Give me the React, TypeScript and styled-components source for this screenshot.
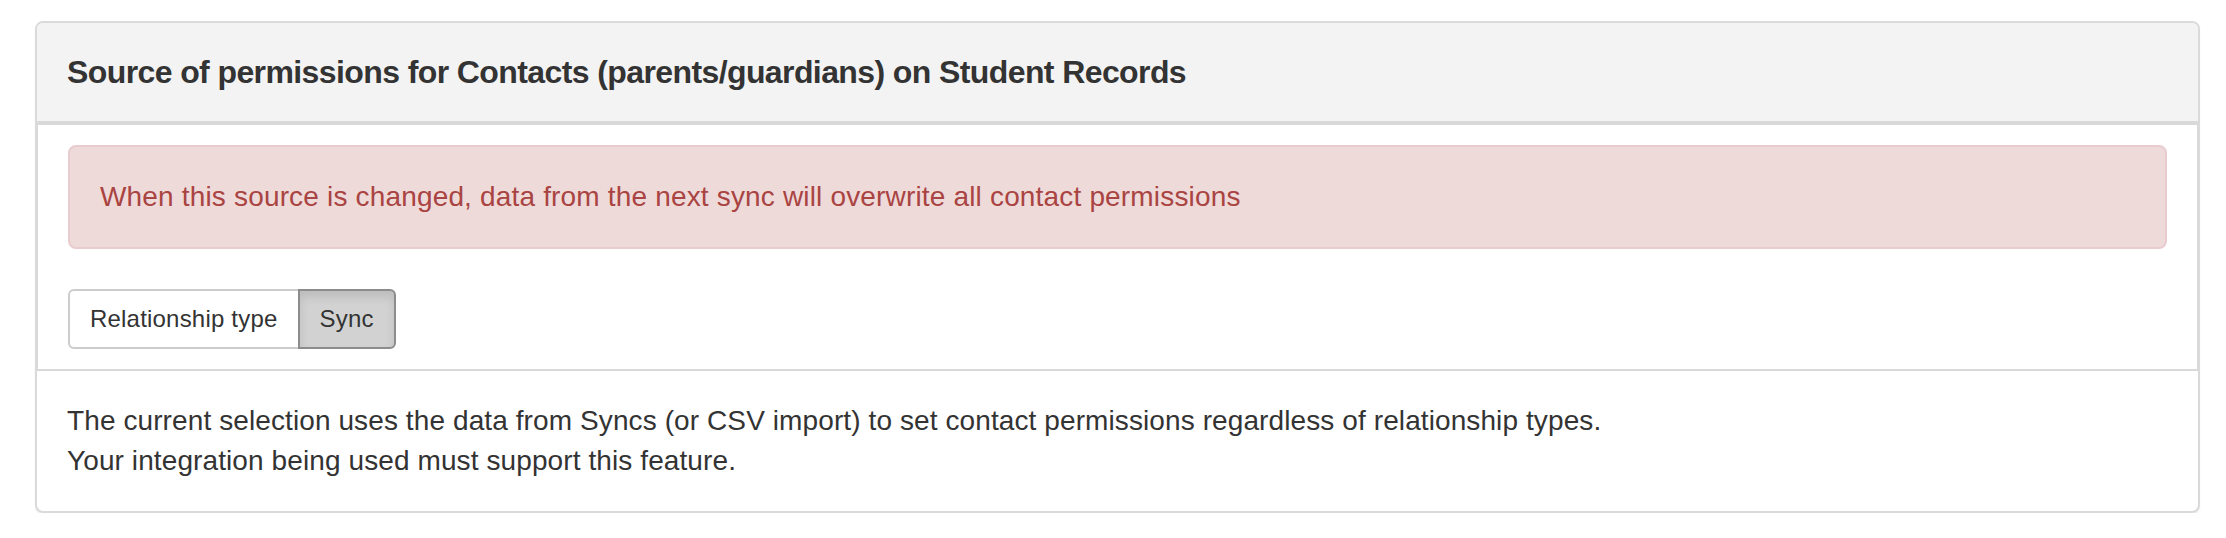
import React from 'react';
import styled, { createGlobalStyle } from 'styled-components';

const GlobalStyle = createGlobalStyle`
  body {
    margin: 0;
    background: #ffffff;
    font-family: 'Liberation Sans', Helvetica, Arial, sans-serif;
    color: #333333;
  }
`;

const Page = styled.div`
  padding: 21px 26px 0 35px;
`;

const Panel = styled.div`
  border: 2px solid #dadada;
  border-radius: 8px;
  background: #ffffff;
  box-shadow: 0 2px 2px rgba(0, 0, 0, 0.05);
  overflow: hidden;
`;

const PanelHeading = styled.div`
  display: flex;
  align-items: center;
  height: 98px;
  padding: 0 30px;
  background: #f3f3f3;
  border-bottom: 2px solid #d9d9d9;
`;

const PanelTitle = styled.h3`
  margin: 0;
  font-size: 32px;
  font-weight: 700;
  color: #333333;
  letter-spacing: -0.6px;
`;

const SettingBody = styled.div`
  padding: 20px 30px;
  border-top: 2px solid #d9d9d9;
  border-bottom: 2px solid #d9d9d9;
  border-left: 1px solid #d9d9d9;
  border-right: 1px solid #d9d9d9;
`;

const Alert = styled.div`
  padding: 30px;
  margin-bottom: 40px;
  border: 2px solid #e9ccd0;
  border-radius: 8px;
  background: #efdada;
  color: #a94442;
  font-size: 28px;
  line-height: 40px;
  letter-spacing: 0.17px;
`;

const ButtonGroup = styled.div`
  display: inline-flex;
`;

const ToggleButton = styled.button<{ $active?: boolean }>`
  font-family: inherit;
  font-size: 24px;
  line-height: 36px;
  letter-spacing: 0.2px;
  padding: 10px 20px;
  border: 2px solid ${(p) => (p.$active ? '#8c8c8c' : '#cccccc')};
  background: ${(p) => (p.$active ? '#d2d2d2' : '#ffffff')};
  color: #333333;
  box-shadow: ${(p) => (p.$active ? 'inset 0 6px 10px rgba(0, 0, 0, 0.1)' : 'none')};
  cursor: pointer;

  &:first-child {
    border-radius: 6px 0 0 6px;
  }
  &:last-child {
    border-radius: 0 6px 6px 0;
    margin-left: -2px;
  }
`;

const Description = styled.div`
  padding: 30px;
  font-size: 28px;
  line-height: 40px;
  letter-spacing: 0.1px;
  color: #333333;
`;

const App = () => {
  const [source, setSource] = React.useState<'relationship' | 'sync'>('sync');

  return (
    <Page>
      <GlobalStyle />
      <Panel>
        <PanelHeading>
          <PanelTitle>Source of permissions for Contacts (parents/guardians) on Student Records</PanelTitle>
        </PanelHeading>
        <SettingBody>
          <Alert>
            When this source is changed, data from the next sync will overwrite all contact permissions
          </Alert>
          <ButtonGroup>
            <ToggleButton $active={source === 'relationship'} onClick={() => setSource('relationship')}>
              Relationship type
            </ToggleButton>
            <ToggleButton $active={source === 'sync'} onClick={() => setSource('sync')}>
              Sync
            </ToggleButton>
          </ButtonGroup>
        </SettingBody>
        <Description>
          The current selection uses the data from Syncs (or CSV import) to set contact permissions regardless of
          relationship types.
          <br />
          Your integration being used must support this feature.
        </Description>
      </Panel>
    </Page>
  );
};

export default App;
